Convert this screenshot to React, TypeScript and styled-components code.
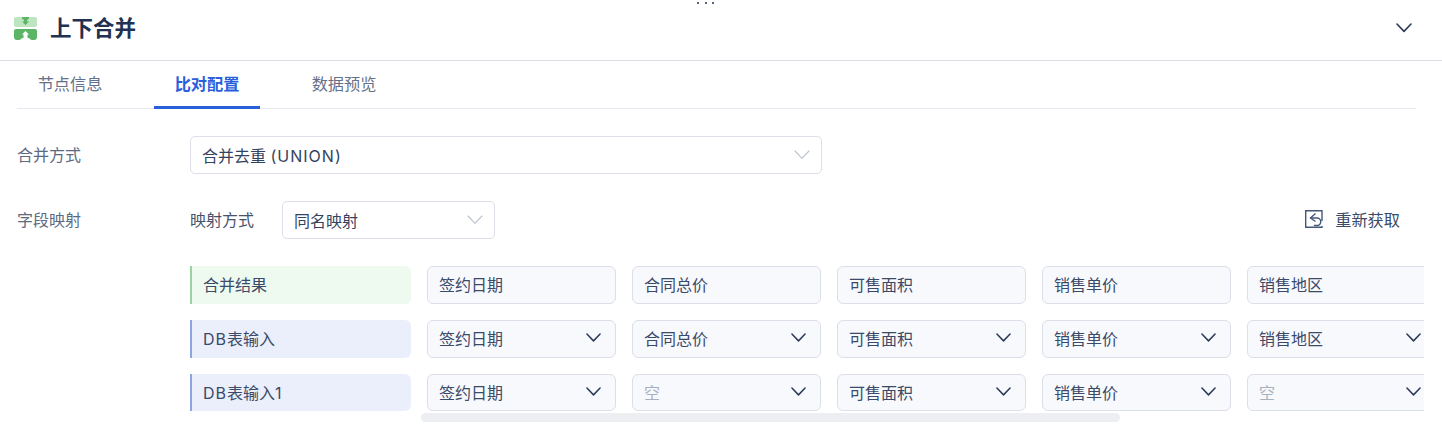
import React from "react";
import styled, { createGlobalStyle } from "styled-components";

const GlobalStyle = createGlobalStyle`
  html, body {
    margin: 0;
    padding: 0;
    background: #fff;
    overflow: hidden;
  }
  body {
    font-family: Inter, "Noto Sans CJK SC", "Noto Sans", sans-serif;
    color: #33435f;
  }
`;

const Page = styled.div`
  width: 1442px;
  height: 436px;
  position: relative;
  overflow: hidden;
`;

const DragDots = styled.div`
  position: absolute;
  top: 2px;
  left: 697px;
  display: flex;
  gap: 5.5px;
  span {
    width: 2px;
    height: 2px;
    background: #55647e;
  }
`;

const Header = styled.header`
  height: 56px;
  padding: 0 30px 4px 14px;
  border-bottom: 1px solid #dcdee6;
  display: flex;
  align-items: center;
`;

const Title = styled.h1`
  margin: 0 0 0 13px;
  font-size: 21.5px;
  line-height: 28px;
  font-weight: 700;
  color: #22314f;
  flex: 1;
`;

const Tabs = styled.nav`
  margin: 0 26px 0 17px;
  height: 47px;
  border-bottom: 1px solid #e6e8ef;
  display: flex;
  gap: 31px;
`;

const Tab = styled.div<{ $active?: boolean }>`
  width: 106px;
  height: 48px;
  box-sizing: border-box;
  text-align: center;
  font-size: 16.2px;
  line-height: 47px;
  font-weight: ${(p) => (p.$active ? 700 : 400)};
  color: ${(p) => (p.$active ? "#2a5fdc" : "#64718a")};
  border-bottom: 3px solid ${(p) => (p.$active ? "#2a5fdc" : "transparent")};
`;

const Form = styled.div`
  padding: 27px 18px 0 17px;
  display: flex;
  flex-direction: column;
  gap: 27px;
`;

const FormRow = styled.div`
  display: flex;
  align-items: center;
`;

const FormLabel = styled.div`
  width: 173px;
  flex-shrink: 0;
  font-size: 16px;
  line-height: 38px;
  height: 38px;
  color: #5c6a82;
`;

const Select = styled.div<{ $width: number }>`
  width: ${(p) => p.$width}px;
  height: 38px;
  box-sizing: border-box;
  border: 1px solid #dcdfe9;
  border-radius: 5px;
  background: #fff;
  display: flex;
  align-items: center;
  justify-content: space-between;
  padding: 0 11px;
  font-size: 16px;
  color: #33435f;
`;

const MappingLabel = styled.div`
  font-size: 16px;
  color: #45536c;
  margin-right: 28px;
  padding-bottom: 2px;
`;

const Refresh = styled.div`
  margin-left: auto;
  margin-right: 24px;
  padding-bottom: 2px;
  display: flex;
  align-items: center;
  gap: 12px;
  font-size: 16.2px;
  color: #3a4a68;
`;

const Latin = styled.span`
  letter-spacing: 1px;
`;

const Mapping = styled.div`
  margin: 27px 0 0 190px;
  width: 1234px;
  overflow: hidden;
  display: flex;
  flex-direction: column;
  gap: 16px;
`;

const MapRow = styled.div<{ $height?: number }>`
  display: flex;
  height: ${(p) => p.$height ?? 38}px;
  gap: 16px;
`;

const SourceCell = styled.div<{ $result?: boolean }>`
  width: 221px;
  flex-shrink: 0;
  box-sizing: border-box;
  padding: 0 0 2px 11px;
  border-left: 2px solid ${(p) => (p.$result ? "#9ad2a4" : "#8ea6e0")};
  border-radius: 0 6px 6px 0;
  background: ${(p) => (p.$result ? "#eefaf0" : "#eaeffb")};
  display: flex;
  align-items: center;
  font-size: 16px;
  color: #3a4a68;
`;

const FieldCell = styled.div<{ $empty?: boolean }>`
  width: 189px;
  flex-shrink: 0;
  box-sizing: border-box;
  border: 1px solid #dcdfe9;
  border-radius: 6px;
  background: #f8f9fd;
  padding: 0 14px 2px 11px;
  display: flex;
  align-items: center;
  justify-content: space-between;
  font-size: 16px;
  color: ${(p) => (p.$empty ? "#a9b1c0" : "#3a4a68")};
`;

const ArrowSlot = styled.span`
  display: flex;
  margin-top: -1px;
`;

const ScrollThumb = styled.div`
  position: absolute;
  top: 413px;
  left: 421px;
  width: 699px;
  height: 9px;
  border-radius: 5px;
  background: #eceef1;
`;

const NodeIcon = () => (
  <svg width="23" height="23" viewBox="0 0 23 23">
    <rect x="0" y="0" width="23" height="10" rx="2" fill="#bde5bf" />
    <path d="M8 0h7v1.500l-2 1.500v1.500h2l-3.500 3.500L8 4.500h2V3L8 1.500z" fill="#5cb565" />
    <path d="M2 12h19a2 2 0 0 1 2 2v6a3 3 0 0 1-3 3h-2c-1.500 0-2.500-2-4-2h-5c-1.500 0-2.500 2-4 2H3a3 3 0 0 1-3-3v-6a2 2 0 0 1 2-2z" fill="#5cb565" />
    <path d="M11.500 14 15 17.500H13.500V21h-4v-3.500H8z" fill="#fff" />
  </svg>
);

const Chevron = ({ size = 15, color = "#2b3b57", weight = 1.6 }: { size?: number; color?: string; weight?: number }) => (
  <svg width={size} height={size * 0.6} viewBox="0 0 16 9.6" fill="none">
    <path d="M1 1l7 7.4L15 1" stroke={color} strokeWidth={weight} strokeLinecap="round" strokeLinejoin="round" />
  </svg>
);

const RefreshIcon = () => (
  <svg width="18" height="18" viewBox="0 0 18 18" fill="none" stroke="#46587a" strokeWidth="1.4">
    <path d="M17 11V.7H.7v16.600H17V16" />
    <path d="M10.500 3.500 5.500 8l5 3.500" strokeLinejoin="round" />
    <path d="M5.500 8h6.500a3.500 3.500 0 0 1 0 7.500H9.500" strokeLinecap="round" />
  </svg>
);

const fieldNames = ["签约日期", "合同总价", "可售面积", "销售单价", "销售地区"];
const input1Fields = ["签约日期", "空", "可售面积", "销售单价", "空"];

const App = () => {
  return (
    <Page>
      <GlobalStyle />
      <DragDots>
        <span />
        <span />
        <span />
      </DragDots>
      <Header>
        <NodeIcon />
        <Title>上下合并</Title>
        <Chevron size={16} />
      </Header>
      <Tabs>
        <Tab>节点信息</Tab>
        <Tab $active>比对配置</Tab>
        <Tab>数据预览</Tab>
      </Tabs>
      <Form>
        <FormRow>
          <FormLabel>合并方式</FormLabel>
          <Select $width={632}>
            <span>
              合并去重 <Latin>(UNION)</Latin>
            </span>
            <Chevron size={16} color="#bcc2cf" weight={1.1} />
          </Select>
        </FormRow>
        <FormRow>
          <FormLabel>字段映射</FormLabel>
          <MappingLabel>映射方式</MappingLabel>
          <Select $width={213}>
            同名映射
            <Chevron size={16} color="#bcc2cf" weight={1.1} />
          </Select>
          <Refresh>
            <RefreshIcon />
            重新获取
          </Refresh>
        </FormRow>
      </Form>
      <Mapping>
        <MapRow>
          <SourceCell $result>合并结果</SourceCell>
          {fieldNames.map((f) => (
            <FieldCell key={f}>{f}</FieldCell>
          ))}
        </MapRow>
        <MapRow>
          <SourceCell>
            <span>
              <Latin>DB</Latin>表输入
            </span>
          </SourceCell>
          {fieldNames.map((f) => (
            <FieldCell key={f}>
              {f}
              <ArrowSlot>
                <Chevron />
              </ArrowSlot>
            </FieldCell>
          ))}
        </MapRow>
        <MapRow $height={37}>
          <SourceCell>
            <span>
              <Latin>DB</Latin>表输入<Latin>1</Latin>
            </span>
          </SourceCell>
          {input1Fields.map((f, i) => (
            <FieldCell key={i} $empty={f === "空"}>
              {f}
              <ArrowSlot>
                <Chevron />
              </ArrowSlot>
            </FieldCell>
          ))}
        </MapRow>
      </Mapping>
      <ScrollThumb />
    </Page>
  );
};

export default App;
